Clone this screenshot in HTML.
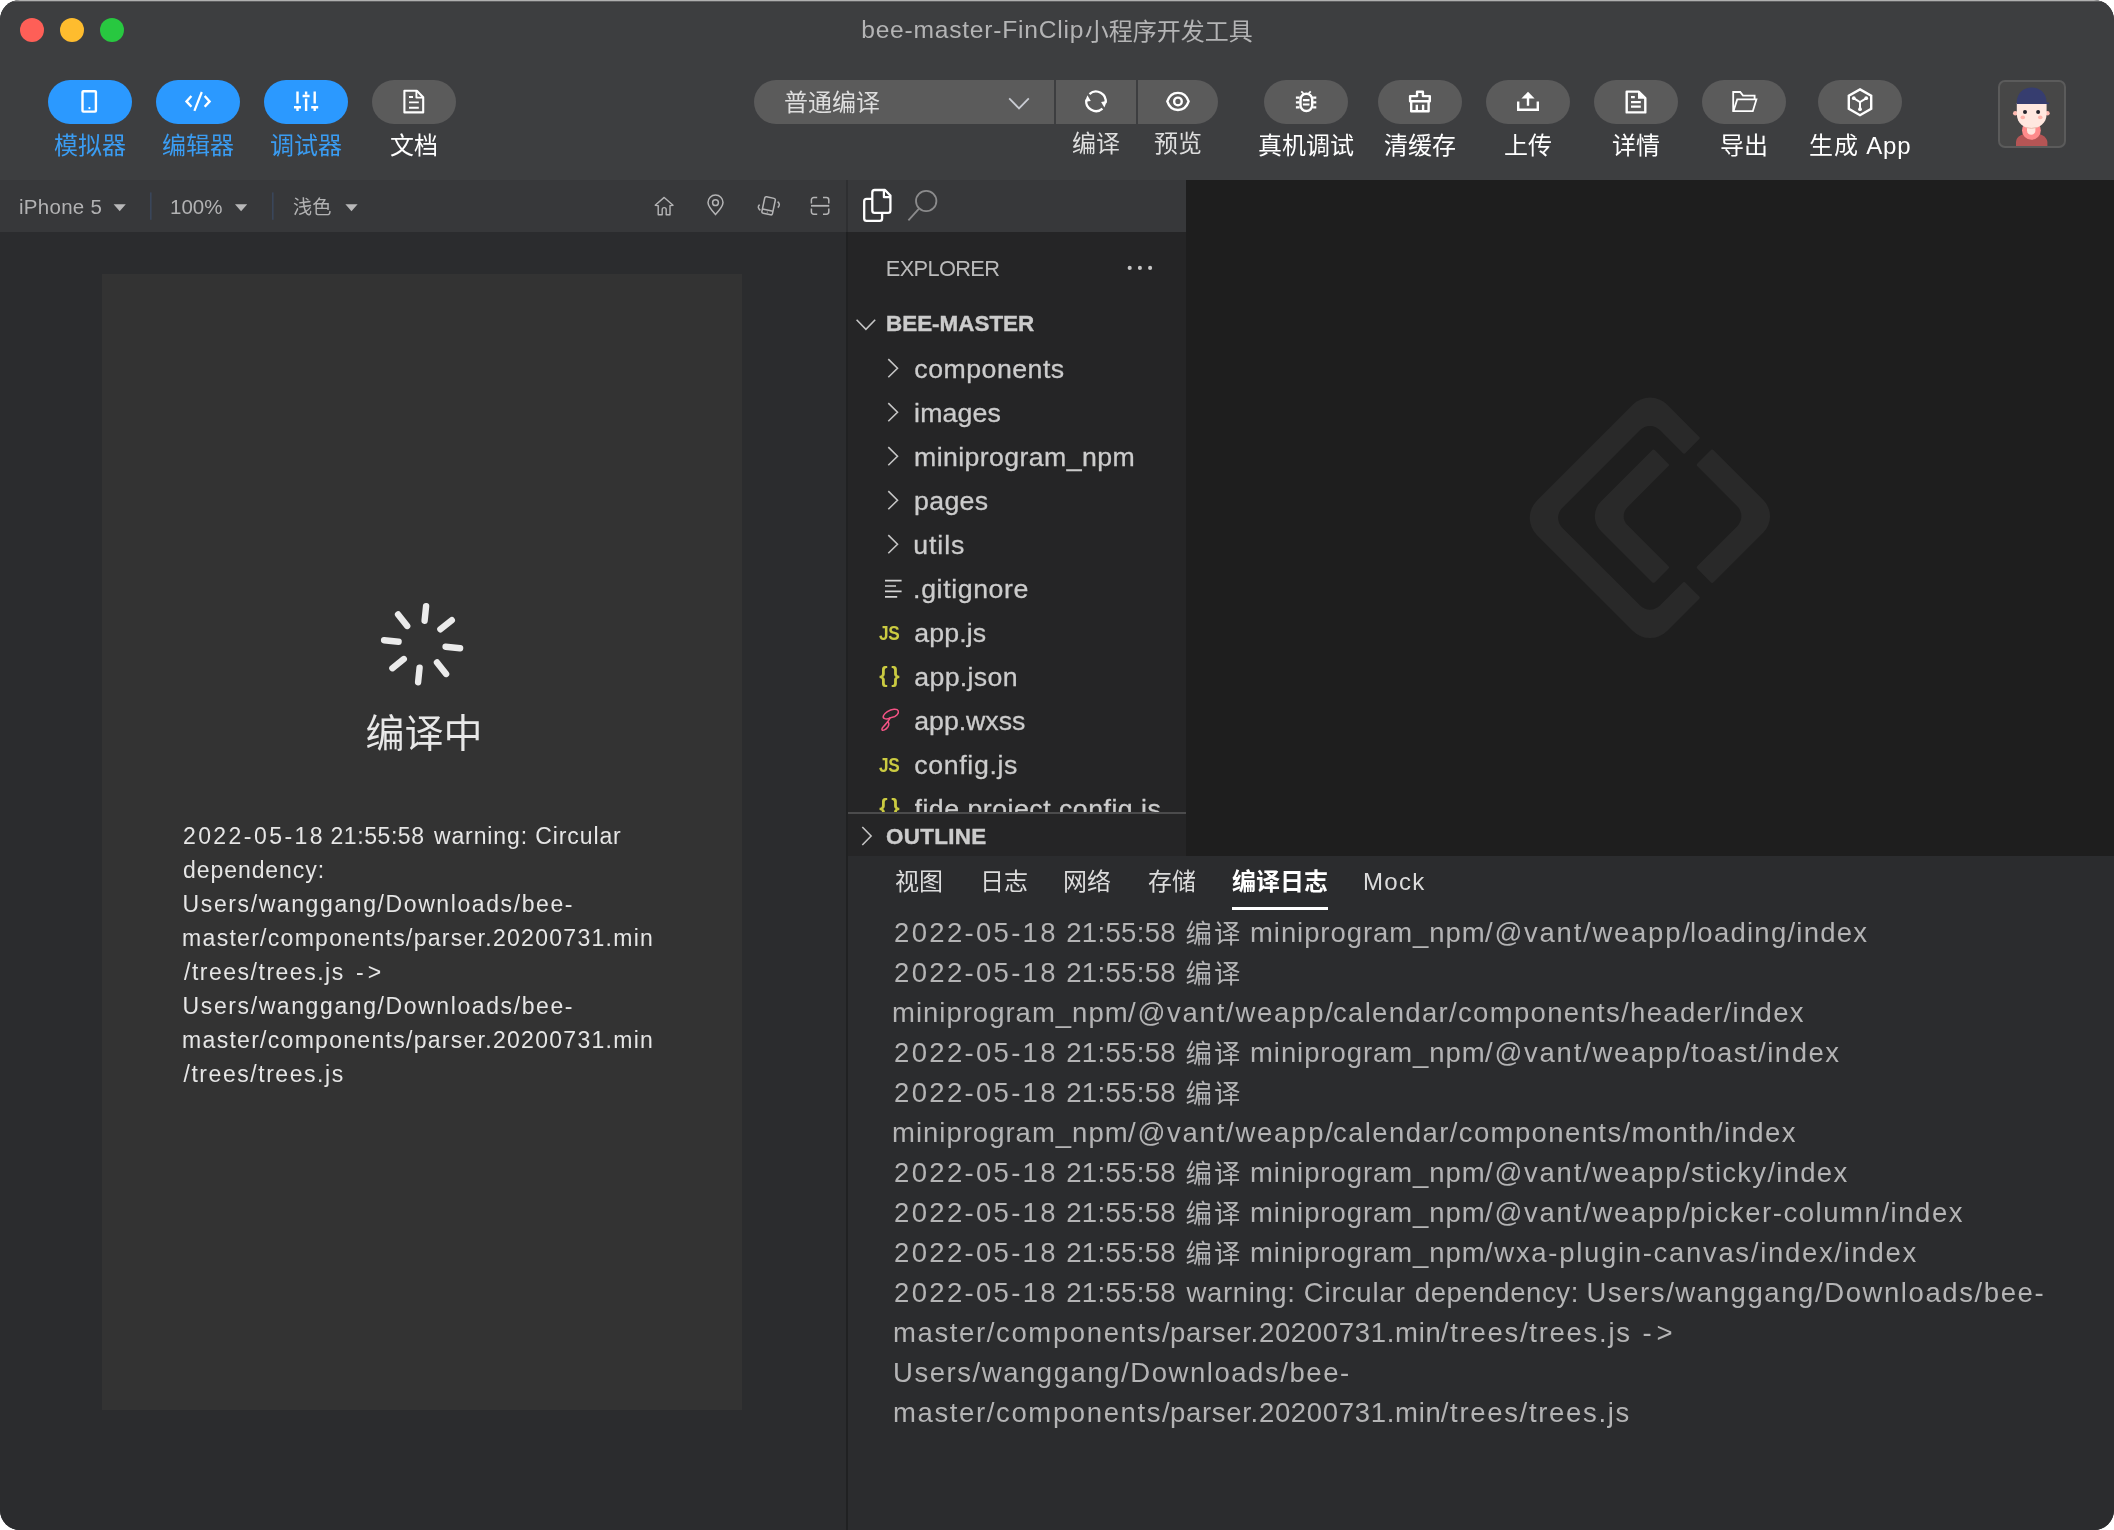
<!DOCTYPE html>
<html lang="zh-CN">
<head>
<meta charset="utf-8">
<title>bee-master-FinClip小程序开发工具</title>
<style>
html,body{margin:0;padding:0;background:#fff;}
body{width:2114px;height:1530px;overflow:hidden;position:relative;
  font-family:"Liberation Sans","Noto Sans CJK SC",sans-serif;-webkit-font-smoothing:antialiased;}
*{box-sizing:border-box;}
#win{position:absolute;left:0;top:0;width:2114px;height:1530px;border-radius:20px;overflow:hidden;background:#2b2c2e;will-change:transform;}
.abs{position:absolute;}
.t{position:absolute;white-space:nowrap;line-height:1;}
svg{position:absolute;overflow:visible;}
/* top toolbar */
#topbar{position:absolute;left:0;top:0;width:2114px;height:180px;background:#3d3e40;}
#hl{position:absolute;left:0;top:0;width:2114px;height:3px;background:linear-gradient(#b0b0b0 0,#b0b0b0 1px,#5e5e60 1px,#5e5e60 2px,#3a3b3d 2px,#3a3b3d 3px);}
.dot{position:absolute;width:24px;height:24px;border-radius:50%;top:18px;}
.pill{position:absolute;top:80px;width:84px;height:44px;border-radius:22px;background:#5b5b5b;}
.pill.on{background:#2b99ff;}
.lbl{position:absolute;top:133px;width:160px;text-align:center;font-size:24px;line-height:26px;color:#fff;white-space:nowrap;}
.lbl.on{color:#3a9cf2;}
/* sub toolbar */
#simbar{position:absolute;left:0;top:180px;width:846px;height:52px;background:#37383a;}
#sim{position:absolute;left:0;top:232px;width:846px;height:1298px;background:#2b2c2e;}
#phone{position:absolute;left:102px;top:274px;width:640px;height:1136px;background:#333333;}
#vdiv{position:absolute;left:846px;top:180px;width:2px;height:1350px;background:#202122;}
#vdivtop{position:absolute;left:846px;top:180px;width:2px;height:52px;background:#2e2f31;}
/* explorer */
#actbar{position:absolute;left:848px;top:180px;width:338px;height:52px;background:#37383a;}
#explorer{position:absolute;left:848px;top:232px;width:338px;height:624px;background:#252526;overflow:hidden;}
#editor{position:absolute;left:1186px;top:180px;width:928px;height:676px;background:#1e1e1e;}
#panel{position:absolute;left:848px;top:856px;width:1266px;height:674px;background:#2b2c2e;}
.row{position:absolute;left:914px;margin-top:0.8px;font-size:26.7px;line-height:30px;color:#cccccc;white-space:nowrap;-webkit-text-stroke:0.3px #cccccc;}
.tab{position:absolute;top:868px;font-size:24px;line-height:28px;color:#dcdcdc;white-space:nowrap;}
.log{position:absolute;left:894px;margin-top:0.7px;font-size:27.5px;line-height:40px;color:#b4b4b5;white-space:nowrap;height:40px;}
.lp{position:absolute;top:0;white-space:nowrap;}
.cj{font-size:26.4px;margin-top:1.3px;}
.msg{position:absolute;left:183px;font-size:23px;margin-top:1.2px;line-height:34px;color:#e6e6e6;white-space:nowrap;}
/*FIT-START*/
#beem{letter-spacing:0.022px;margin-left:0.00px;margin-top:1.30px}
#exptitle{letter-spacing:-0.657px;margin-left:-0.20px;margin-top:0.60px}
#lg0a{letter-spacing:2.302px;margin-left:0.10px}
#lg0b{letter-spacing:1.900px;margin-left:0.60px}
#lg0c{letter-spacing:0.929px;margin-left:-2.00px}
#lg0d{letter-spacing:1.750px;margin-left:-1.00px}
#lg0e{letter-spacing:1.250px;margin-left:-2.00px}
#lg0t{letter-spacing:0.332px;margin-left:0.20px}
#lg10c{letter-spacing:1.624px;margin-left:-1.00px}
#lg10d{letter-spacing:0.689px;margin-left:-1.00px}
#lg10e{letter-spacing:1.728px;margin-left:0.80px}
#lg10f{letter-spacing:5.000px;margin-left:4.40px}
#lg11c{letter-spacing:1.550px;margin-left:-1.00px}
#lg12c{letter-spacing:1.624px;margin-left:-1.00px}
#lg12d{letter-spacing:0.689px;margin-left:-1.00px}
#lg12e{letter-spacing:1.671px;margin-left:0.80px}
#lg1a{letter-spacing:2.302px;margin-left:0.10px}
#lg1b{letter-spacing:1.900px;margin-left:0.60px}
#lg1t{letter-spacing:0.332px;margin-left:0.20px}
#lg2c{letter-spacing:1.000px;margin-left:-2.00px}
#lg2d{letter-spacing:1.750px;margin-left:0.00px}
#lg2e{letter-spacing:1.323px;margin-left:-1.00px}
#lg3a{letter-spacing:2.302px;margin-left:0.10px}
#lg3b{letter-spacing:1.900px;margin-left:0.60px}
#lg3c{letter-spacing:0.929px;margin-left:-2.00px}
#lg3d{letter-spacing:1.750px;margin-left:-1.00px}
#lg3e{letter-spacing:1.500px;margin-left:-1.00px}
#lg3t{letter-spacing:0.332px;margin-left:0.20px}
#lg4a{letter-spacing:2.302px;margin-left:0.10px}
#lg4b{letter-spacing:1.900px;margin-left:0.60px}
#lg4t{letter-spacing:0.332px;margin-left:0.20px}
#lg5c{letter-spacing:1.000px;margin-left:-2.00px}
#lg5d{letter-spacing:1.750px;margin-left:0.00px}
#lg5e{letter-spacing:1.400px;margin-left:-1.00px}
#lg6a{letter-spacing:2.302px;margin-left:0.10px}
#lg6b{letter-spacing:1.900px;margin-left:0.60px}
#lg6c{letter-spacing:0.929px;margin-left:-2.00px}
#lg6d{letter-spacing:1.750px;margin-left:-1.00px}
#lg6e{letter-spacing:1.273px;margin-left:-1.00px}
#lg6t{letter-spacing:0.332px;margin-left:0.20px}
#lg7a{letter-spacing:2.302px;margin-left:0.10px}
#lg7b{letter-spacing:1.900px;margin-left:0.60px}
#lg7c{letter-spacing:0.929px;margin-left:-2.00px}
#lg7d{letter-spacing:1.750px;margin-left:-1.00px}
#lg7e{letter-spacing:1.556px;margin-left:-2.00px}
#lg7t{letter-spacing:0.332px;margin-left:0.20px}
#lg8a{letter-spacing:2.302px;margin-left:0.10px}
#lg8b{letter-spacing:1.900px;margin-left:0.60px}
#lg8c{letter-spacing:0.929px;margin-left:-2.00px}
#lg8e{letter-spacing:1.690px;margin-left:-1.00px}
#lg8t{letter-spacing:0.332px;margin-left:0.20px}
#lg9a{letter-spacing:2.313px;margin-left:0.10px}
#lg9c{letter-spacing:0.614px;margin-left:0.60px}
#lg9d{letter-spacing:0.907px;margin-left:-0.20px}
#lg9e{letter-spacing:0.600px;margin-left:-0.20px}
#lg9f{letter-spacing:1.586px;margin-left:-1.60px}
#lg9t{letter-spacing:0.332px;margin-left:0.20px}
#outl{letter-spacing:0.300px;margin-left:0.00px;margin-top:2.80px}
#tc{letter-spacing:0.000px;margin-left:0.70px;margin-top:2.00px}
#tl{letter-spacing:0.770px;margin-left:0.20px}
#x13{letter-spacing:0.840px;margin-left:0.30px}
#x14{letter-spacing:0.286px;margin-left:-1.00px}
#x15{letter-spacing:0.000px;margin-left:-1.00px}
#x16{margin-left:-0.00px;margin-top:2.00px}
#x18{letter-spacing:2.440px;margin-left:-0.10px}
#x18t{letter-spacing:0.571px;margin-left:-0.50px}
#x18w{letter-spacing:0.894px;margin-left:0.90px}
#x19{letter-spacing:0.920px;margin-left:0.10px}
#x20{letter-spacing:1.596px;margin-left:-0.40px}
#x21{letter-spacing:1.286px;margin-left:-0.90px}
#x22{letter-spacing:1.512px;margin-left:1.00px}
#x22f{letter-spacing:4.000px;margin-left:3.00px}
#x23{letter-spacing:1.596px;margin-left:-0.40px}
#x24{letter-spacing:1.286px;margin-left:-0.90px}
#x25{letter-spacing:1.543px;margin-left:0.50px}
#x26{letter-spacing:0.500px;margin-left:0.30px}
#x27{letter-spacing:0.120px;margin-left:0.10px}
#x28{letter-spacing:0.393px;margin-left:0.10px}
#x29{letter-spacing:0.325px;margin-left:0.10px}
#x30{letter-spacing:0.900px;margin-left:-0.70px}
#x31{letter-spacing:0.611px;margin-left:-0.90px}
#x32{letter-spacing:0.120px;margin-left:0.30px}
#x34{letter-spacing:0.329px;margin-left:0.30px}
#x36{letter-spacing:-0.029px;margin-left:0.30px}
#x37{letter-spacing:0.650px;margin-left:0.30px}
#x39{letter-spacing:0.500px;margin-left:0.50px}
#x41{margin-left:-0.00px}
#x42{margin-left:1.00px}
#x43{margin-left:0.00px}
#x44{margin-left:1.00px}
#x45{margin-left:1.00px}
#x46{letter-spacing:1.333px;margin-left:0.00px}
#x5{margin-left:0.00px;margin-top:1.00px}
/*FIT-END*/
</style>
</head>
<body>
<div id="win">
<div id="topbar"></div>
<div id="hl"></div>
<!-- traffic lights -->
<div class="dot" style="left:19.5px;background:#fe5f57;"></div>
<div class="dot" style="left:59.5px;background:#febc2e;"></div>
<div class="dot" style="left:99.5px;background:#28c840;"></div>
<div class="t" id="title" style="left:0;top:15px;font-size:24.6px;line-height:30px;color:#b4b4b5;"><span class="lp" id="tl" style="left:861px;">bee-master-FinClip</span><span class="lp" id="tc" style="left:1084px;font-size:24px;">小程序开发工具</span></div>

<!-- TOOLBAR-LEFT -->
<div class="pill on" style="left:48px;"></div>
<div class="pill on" style="left:156px;"></div>
<div class="pill on" style="left:264px;"></div>
<div class="pill" style="left:372px;"></div>
<svg style="left:48px;top:80px;" width="84" height="44" viewBox="0 0 84 44" fill="none" stroke="#fff" stroke-width="2.4">
  <rect x="34.5" y="11.2" width="13.4" height="20.4" rx="0.9"/>
  <circle cx="41.4" cy="28.1" r="1.1" fill="#fff" stroke="none"/>
</svg>
<svg style="left:156px;top:80px;" width="84" height="44" viewBox="0 0 84 44" fill="none" stroke="#fff" stroke-width="2.4">
  <path d="M35.4 16 L30.5 21.4 L35.4 26.8"/>
  <path d="M48.7 16 L53.6 21.4 L48.7 26.8"/>
  <path d="M45.8 12 L38.4 30.8" stroke-width="2.2"/>
</svg>
<svg style="left:264px;top:80px;" width="84" height="44" viewBox="0 0 84 44" fill="none" stroke="#fff" stroke-width="2.4">
  <path d="M33.5 11.6 V23.4 M33.5 27.2 V31 M30 27.2 H37"/>
  <path d="M42.1 11.6 V14.4 M42.1 18.6 V31 M38.6 16 H45.6"/>
  <path d="M50.7 11.6 V23.4 M50.7 27.2 V31 M47.2 27.2 H54.2"/>
</svg>
<svg style="left:372px;top:80px;" width="84" height="44" viewBox="0 0 84 44" fill="none" stroke="#fff" stroke-width="2.1" stroke-linejoin="round">
  <path d="M32.4 10.7 H44.8 L51.2 17.2 V32.4 H32.4 Z"/>
  <path d="M44.4 11 V17.6 H51" stroke-width="1.9"/>
  <path d="M37 17 H41 M37 22.4 H46.8 M37 27.8 H46.8" stroke-width="1.9"/>
</svg>
<div id="x1" class="lbl on" style="left:10px;">模拟器</div>
<div id="x2" class="lbl on" style="left:118px;">编辑器</div>
<div id="x3" class="lbl on" style="left:226px;">调试器</div>
<div id="x4" class="lbl" style="left:334px;">文档</div>
<!-- TOOLBAR-CENTER -->
<div class="abs" style="left:754px;top:80px;width:300px;height:44px;border-radius:22px 0 0 22px;background:#5b5b5b;"></div>
<div class="abs" style="left:1056px;top:80px;width:80px;height:44px;background:#5b5b5b;"></div>
<div class="abs" style="left:1138px;top:80px;width:80px;height:44px;border-radius:0 22px 22px 0;background:#5b5b5b;"></div>
<div id="x5" class="t" style="left:784px;top:88px;font-size:24px;line-height:28px;color:#dedede;">普通编译</div>
<svg style="left:1004px;top:92px;" width="30" height="22" viewBox="0 0 30 22" fill="none" stroke="#c9ccd3" stroke-width="1.8">
  <path d="M5.2 6.4 L15 16.4 L24.8 6.4"/>
</svg>
<svg style="left:1056px;top:80px;" width="80" height="44" viewBox="0 0 80 44" fill="none" stroke="#fff" stroke-width="2.3">
  <path d="M33.47 14.13 A9.7 9.7 0 0 1 49.51 23.02"/>
  <path d="M46.45 28.55 A9.7 9.7 0 0 1 30.41 19.66"/>
  <path d="M45.1 21.9 L50.9 21.1 L48.4 27.6 Z" fill="#fff" stroke="none"/>
  <path d="M34.8 21 L29 21.7 L31.4 15.2 Z" fill="#fff" stroke="none"/>
</svg>
<svg style="left:1138px;top:80px;" width="80" height="44" viewBox="0 0 80 44" fill="none" stroke="#fff" stroke-width="2.4">
  <path d="M29.3 21.4 C31 16.2 35 12.85 39.95 12.85 C44.9 12.85 48.9 16.2 50.6 21.4 C48.9 26.6 44.9 29.95 39.95 29.95 C35 29.95 31 26.6 29.3 21.4 Z"/>
  <circle cx="39.95" cy="21.4" r="3.8"/>
</svg>
<div id="x6" class="lbl" style="left:1016px;top:131px;color:#dedede;">编译</div>
<div id="x7" class="lbl" style="left:1098px;top:131px;color:#dedede;">预览</div>
<!-- TOOLBAR-RIGHT -->
<div class="pill" style="left:1264px;"></div>
<div class="pill" style="left:1378px;"></div>
<div class="pill" style="left:1486px;"></div>
<div class="pill" style="left:1594px;"></div>
<div class="pill" style="left:1702px;"></div>
<div class="pill" style="left:1818px;"></div>
<!-- bug -->
<svg style="left:1264px;top:80px;" width="84" height="44" viewBox="0 0 84 44" fill="none" stroke="#fff" stroke-width="2.4">
  <rect x="36.5" y="13.7" width="11.7" height="17.3" rx="5.85"/>
  <path d="M31.9 17.7 H35.6 M31.9 22.3 H35.6 M31.9 27.3 H35.6 M49.1 17.7 H52.3 M49.1 22.3 H52.3 M49.1 27.3 H52.3" stroke-width="2.2"/>
  <path d="M38.9 20.1 H45.5 M38.9 24.5 H45.5" stroke-width="2.2"/>
  <path d="M37.3 11.4 L39.8 14 M46.7 11.4 L44.2 14" stroke-width="1.8"/>
</svg>
<!-- broom -->
<svg style="left:1378px;top:80px;" width="84" height="44" viewBox="0 0 84 44" fill="none" stroke="#fff" stroke-width="2.4">
  <path d="M32.1 21.2 V16.1 H39.05 V11.7 H44.9 V16.1 H51.8 V21.2 Z" stroke-linejoin="round"/>
  <path d="M33.2 21.2 V31.3 H50.6 V21.2" stroke-linejoin="round"/>
  <path d="M38.8 24.7 V31.3 M45.1 24.7 V31.3"/>
</svg>
<!-- upload -->
<svg style="left:1486px;top:80px;" width="84" height="44" viewBox="0 0 84 44" fill="none" stroke="#fff" stroke-width="2.4">
  <path d="M32.2 21.6 V29.8 H51.8 V21.6"/>
  <path d="M42 25.8 V16"/>
  <path d="M35.4 18.6 L42 11.8 L48.6 18.6 Z" fill="#fff" stroke="none"/>
</svg>
<!-- detail doc -->
<svg style="left:1594px;top:80px;" width="84" height="44" viewBox="0 0 84 44" fill="none" stroke="#fff" stroke-width="2.4">
  <path d="M32.7 11.6 H44.6 L51.3 18.2 V32.4 H32.7 Z" stroke-linejoin="round"/>
  <path d="M44 11.2 L51.6 18.8 H44 Z" fill="#fff" stroke="none"/>
  <path d="M37 17.2 H40.8 M37 22.2 H46.8 M37 26.7 H46.8" stroke-width="2.2"/>
</svg>
<!-- folder -->
<svg style="left:1702.7px;top:80px;" width="84" height="44" viewBox="0 0 84 44" fill="none" stroke="#fff" stroke-width="1.8" stroke-linejoin="miter">
  <path d="M30.2 31.2 V12 H37.2 L40 15.6 H51.6 V19.4"/>
  <path d="M30.4 31.2 L34.2 19.4 H53.4 L49.8 31.2 Z"/>
</svg>
<!-- box -->
<svg style="left:1818px;top:80px;" width="84" height="44" viewBox="0 0 84 44" fill="none" stroke="#fff" stroke-width="2.4" stroke-linejoin="miter">
  <path d="M42 9.4 L53.2 15.8 V28.8 L42 35.2 L30.8 28.8 V15.8 Z"/>
  <path d="M36 18.4 L42 22 L48 18.4 M42 22 V29" stroke-width="2"/>
  <circle cx="35.8" cy="18.2" r="1.9" fill="#fff" stroke="none"/>
  <circle cx="48.2" cy="18.2" r="1.9" fill="#fff" stroke="none"/>
  <circle cx="42" cy="29.2" r="1.9" fill="#fff" stroke="none"/>
</svg>
<div id="x8" class="lbl" style="left:1226px;">真机调试</div>
<div id="x9" class="lbl" style="left:1340px;">清缓存</div>
<div id="x10" class="lbl" style="left:1448px;">上传</div>
<div id="x11" class="lbl" style="left:1556px;">详情</div>
<div id="x12" class="lbl" style="left:1664px;">导出</div>
<div id="x13" class="lbl" style="left:1780px;">生成 App</div>
<!-- avatar -->
<div class="abs" style="left:1998px;top:80px;width:68px;height:68px;border-radius:7px;background:#474747;border:2px solid #5b5b5b;overflow:hidden;"></div>
<svg style="left:1998px;top:80px;" width="68" height="68" viewBox="0 0 68 68">
  <defs><clipPath id="avc"><rect x="2" y="2" width="64" height="64" rx="5"/></clipPath></defs>
  <g clip-path="url(#avc)">
    <path d="M18 70 V62 C18 50 48.6 50 49.4 62 V70 Z" fill="#b55555"/>
    <circle cx="33.4" cy="50.4" r="9.4" fill="#ff8b8b"/>
    <path d="M29 44 H37.4 V50.6 C37.4 56.2 29 56.2 29 50.6 Z" fill="#ffe7df"/>
    <circle cx="17.3" cy="33.2" r="2.3" fill="#ffb9b0"/>
    <circle cx="49.4" cy="33.2" r="2.3" fill="#ffb9b0"/>
    <path d="M18.8 23 H48.6 V34 C48.6 53 18.8 53 18.8 34 Z" fill="#ffe7df"/>
    <path d="M27.4 47.4 Q33.4 49.4 39.4 47.4" stroke="#e9bcae" stroke-width="1" fill="none"/>
    <path d="M18.8 24 V22.4 C18.8 2.4 48.6 2.4 48.6 22.4 L51 22.6 Q51.6 24 50.4 24 Z" fill="#363d6f"/>
    <circle cx="27" cy="32" r="2" fill="#24242c"/>
    <circle cx="40.1" cy="32" r="2" fill="#24242c"/>
    <ellipse cx="24.8" cy="37.4" rx="2.3" ry="1.8" fill="#ffb3aa"/>
    <ellipse cx="42.3" cy="37.4" rx="2.3" ry="1.8" fill="#ffb3aa"/>
  </g>
</svg>

<div id="simbar"></div>
<div id="sim"></div>
<div id="phone"></div>
<!-- SIMBAR-CONTENT -->
<div id="x14" class="t" style="left:20px;top:194px;font-size:20.5px;line-height:26px;color:#b2b2b3;">iPhone 5</div>
<div id="x15" class="t" style="left:171px;top:194px;font-size:20.5px;line-height:26px;color:#b2b2b3;">100%</div>
<div id="x16" class="t" style="left:293px;top:193px;font-size:19.2px;line-height:26px;color:#b2b2b3;">浅色</div>
<svg style="left:0;top:180px;" width="846" height="52" viewBox="0 0 846 52" fill="#b8b8b9">
  <path d="M113.6 24.2 H125.8 L119.7 31.2 Z"/>
  <path d="M235 24.2 H247.2 L241.1 31.2 Z"/>
  <path d="M345.4 24.2 H357.6 L351.5 31.2 Z"/>
  <rect x="150" y="12.4" width="1.6" height="27.4" fill="#3a465a"/>
  <rect x="272" y="12.4" width="1.6" height="27.4" fill="#3a465a"/>
  <g fill="none" stroke="#b4b4b5" stroke-width="1.5" stroke-linejoin="round">
    <!-- home -->
    <path d="M664.2 17.4 L673 25.2 L670 25.6 V34.8 H666.2 V29.6 A2 2 0 0 0 662.2 29.6 V34.8 H658.2 V25.6 L655.2 25.2 Z" stroke-width="1.4"/>
    <!-- location -->
    <path d="M715.5 34.6 C711.4 30.2 708 26.4 708 22.6 A7.5 7.5 0 0 1 723 22.6 C723 26.4 719.6 30.2 715.5 34.6 Z"/>
    <circle cx="715.5" cy="22.7" r="2.9"/>
    <!-- rotate phone -->
    <g transform="rotate(12 768.6 25.8)">
      <rect x="763.2" y="17.4" width="10.8" height="16.8" rx="1.6"/>
      <path d="M763.4 30.2 H774"/>
      <circle cx="768.6" cy="32.2" r="0.6" fill="#b4b4b5" stroke="none"/>
    </g>
    <path d="M759.6 24.6 Q756.6 27.4 760.4 30.4"/>
    <path d="M777.6 21.6 Q781 24.4 777.8 27.6"/>
    <!-- scan -->
    <path d="M811.4 23.4 V20 A2.4 2.4 0 0 1 813.8 17.6 H817.2"/>
    <path d="M823 17.6 H826.4 A2.4 2.4 0 0 1 828.8 20 V23.4"/>
    <path d="M811.4 28.4 V31.8 A2.4 2.4 0 0 0 813.8 34.2 H817.2"/>
    <path d="M823 34.2 H826.4 A2.4 2.4 0 0 0 828.8 31.8 V28.4"/>
    <path d="M811 25.8 H829.2" stroke-width="1.8"/>
  </g>
</svg>
<!-- SIM-CONTENT -->
<svg style="left:0;top:0;" width="846" height="1530" viewBox="0 0 846 1530" fill="none" stroke="#ebebeb" stroke-width="6.4" stroke-linecap="round">
  <path d="M424.6 620.7 L426.1 606.2 M440.4 629.3 L451.8 620.2 M445.6 646.7 L460.1 648.2 M437.0 662.5 L446.1 673.9 M419.6 667.7 L418.1 682.2 M403.8 659.1 L392.4 668.2 M398.6 641.7 L384.1 640.2 M407.2 625.9 L398.1 614.5"/>
</svg>
<div id="x17" class="t" style="left:104px;width:640px;text-align:center;top:710px;font-size:39px;line-height:48px;color:#e8e8e8;">编译中</div>
<div class="msg" style="top:818px;height:34px;"><span class="lp" id="x18" style="left:0;">2022-05-18 </span><span class="lp" id="x18t" style="left:148px;">21:55:58 </span><span class="lp" id="x18w" style="left:250px;">warning: Circular</span></div>
<div id="x19" class="msg" style="top:852px;">dependency:</div>
<div id="x20" class="msg" style="top:886px;">Users/wanggang/Downloads/bee-</div>
<div id="x21" class="msg" style="top:920px;">master/components/parser.20200731.min</div>
<div class="msg" style="top:954px;height:34px;"><span class="lp" id="x22" style="left:0;">/trees/trees.js </span><span class="lp" id="x22f" style="left:170px;">-&gt;</span></div>
<div id="x23" class="msg" style="top:988px;">Users/wanggang/Downloads/bee-</div>
<div id="x24" class="msg" style="top:1022px;">master/components/parser.20200731.min</div>
<div id="x25" class="msg" style="top:1056px;">/trees/trees.js</div>

<div id="actbar"></div>
<div id="explorer"></div>
<div id="editor"></div>
<div id="panel"></div>
<div id="vdiv"></div>
<div id="vdivtop"></div>
<!-- EXPLORER-CONTENT -->
<svg style="left:848px;top:180px;" width="338" height="52" viewBox="0 0 338 52" fill="none">
  <g stroke="#ffffff" stroke-width="2.3" stroke-linejoin="round">
    <path d="M24.3 18.8 H18.6 A2.4 2.4 0 0 0 16.2 21.2 V38.5 A2.4 2.4 0 0 0 18.6 40.9 H31.7 A2.4 2.4 0 0 0 34.1 38.5 V32.8"/>
    <path d="M26.7 10 H37 L42.4 15.6 V30.4 A2.4 2.4 0 0 1 40 32.8 H26.7 A2.4 2.4 0 0 1 24.3 30.4 V12.4 A2.4 2.4 0 0 1 26.7 10 Z"/>
    <path d="M35.9 10.4 V17.2 H42" stroke-width="2.2"/>
  </g>
  <g stroke="#8b8b8c" stroke-width="1.8">
    <circle cx="78.2" cy="21" r="10.2"/>
    <path d="M71 28.6 L60.4 40.4"/>
  </g>
</svg>
<div class="t" style="left:886px;top:255px;font-size:21.8px;line-height:26px;color:#bbbbbb;" id="exptitle">EXPLORER</div>
<svg style="left:1120px;top:258px;" width="40" height="20" viewBox="0 0 40 20" fill="#c5c5c5">
  <circle cx="9.7" cy="9.9" r="2.05"/><circle cx="19.9" cy="9.9" r="2.05"/><circle cx="30.1" cy="9.9" r="2.05"/>
</svg>
<svg style="left:848px;top:232px;" width="338" height="624" viewBox="0 0 338 624" fill="none" stroke="#c5c5c5" stroke-width="1.6">
  <path d="M8.6 87.8 L17.9 97.4 L27.2 87.8"/>
</svg>
<div class="t" style="left:886px;top:310px;font-size:22.4px;line-height:26px;color:#cccccc;font-weight:bold;-webkit-text-stroke:0.4px #cccccc;" id="beem">BEE-MASTER</div>
<div class="abs" style="left:848px;top:232px;width:338px;height:580px;overflow:hidden;">
<div id="x26" class="row" style="left:66px;top:121px;">components</div>
<svg style="left:36px;top:124px;" width="20" height="24" viewBox="0 0 20 24" fill="none" stroke="#c5c5c5" stroke-width="1.6"><path d="M4.3 3.1 L13.5 12.2 L4.3 21.3"/></svg>
<div id="x27" class="row" style="left:66px;top:165px;">images</div>
<svg style="left:36px;top:168px;" width="20" height="24" viewBox="0 0 20 24" fill="none" stroke="#c5c5c5" stroke-width="1.6"><path d="M4.3 3.1 L13.5 12.2 L4.3 21.3"/></svg>
<div id="x28" class="row" style="left:66px;top:209px;">miniprogram_npm</div>
<svg style="left:36px;top:212px;" width="20" height="24" viewBox="0 0 20 24" fill="none" stroke="#c5c5c5" stroke-width="1.6"><path d="M4.3 3.1 L13.5 12.2 L4.3 21.3"/></svg>
<div id="x29" class="row" style="left:66px;top:253px;">pages</div>
<svg style="left:36px;top:256px;" width="20" height="24" viewBox="0 0 20 24" fill="none" stroke="#c5c5c5" stroke-width="1.6"><path d="M4.3 3.1 L13.5 12.2 L4.3 21.3"/></svg>
<div id="x30" class="row" style="left:66px;top:297px;">utils</div>
<svg style="left:36px;top:300px;" width="20" height="24" viewBox="0 0 20 24" fill="none" stroke="#c5c5c5" stroke-width="1.6"><path d="M4.3 3.1 L13.5 12.2 L4.3 21.3"/></svg>
<div id="x31" class="row" style="left:66px;top:341px;">.gitignore</div>
<svg style="left:34px;top:344px;" width="24" height="24" viewBox="0 0 24 24" fill="none" stroke="#d4d4d4" stroke-width="1.7"><path d="M3 4.6 H19.6 M3 10 H14 M3 15.4 H19.6 M3 20.8 H15.2"/></svg>
<div id="x32" class="row" style="left:66px;top:385px;">app.js</div>
<div id="x33" class="t" style="left:31px;top:389px;font-size:20.5px;line-height:24px;font-weight:bold;color:#cbcb41;letter-spacing:-0.3px;transform:scaleX(0.84);transform-origin:0 50%;">JS</div>
<div id="x34" class="row" style="left:66px;top:429px;">app.json</div>
<div id="x35" class="t" style="left:31.3px;top:431px;font-size:21.5px;line-height:24px;font-weight:bold;color:#cbcb41;letter-spacing:3.6px;">{}</div>
<div id="x36" class="row" style="left:66px;top:473px;">app.wxss</div>
<svg style="left:30px;top:474px;" width="24" height="26" viewBox="0 0 24 26" fill="none" stroke="#f55385" stroke-width="1.5" stroke-linecap="round"><path d="M13.4 11.6 C18.6 10.4 21.2 7.2 20.2 4.8 C19.2 2.4 13.6 2.8 9.4 5.6 C5.6 8.2 4 11.2 6.2 12.4 C8 13.4 10.6 12.8 12 11.8"/><path d="M12.2 11.8 C10.6 14.8 8.6 17.4 6.6 19.4 C4.8 21.2 3.4 22.6 4 23.8 C4.8 25 7.8 23.8 9.8 21 C11.4 18.6 11 16 9.4 15.4"/></svg>
<div id="x37" class="row" style="left:66px;top:517px;">config.js</div>
<div id="x38" class="t" style="left:31px;top:521px;font-size:20.5px;line-height:24px;font-weight:bold;color:#cbcb41;letter-spacing:-0.3px;transform:scaleX(0.84);transform-origin:0 50%;">JS</div>
<div id="x39" class="row" style="left:66px;top:561px;width:275px;overflow:hidden;text-overflow:ellipsis;">fide.project.config.json</div>
<div id="x40" class="t" style="left:31.3px;top:563px;font-size:21.5px;line-height:24px;font-weight:bold;color:#cbcb41;letter-spacing:3.6px;">{}</div>
</div>
<div class="abs" style="left:848px;top:812px;width:338px;height:2px;background:#4b4b4c;"></div>
<div class="abs" style="left:848px;top:814px;width:338px;height:42px;background:#252526;"></div>
<svg style="left:848px;top:814px;" width="40" height="42" viewBox="0 0 40 42" fill="none" stroke="#c5c5c5" stroke-width="1.6"><path d="M14.3 13 L23.1 22 L14.3 31"/></svg>
<div class="t" style="left:886px;top:821px;font-size:22.4px;line-height:26px;color:#cccccc;font-weight:bold;-webkit-text-stroke:0.4px #cccccc;" id="outl">OUTLINE</div>
<!-- EDITOR-CONTENT -->
<svg style="left:1186px;top:180px;" width="928" height="676" viewBox="1186 180 928 676" fill="#292929">
  <path d="M1699.3 439.1 L1699.5 438.9 L1699.6 438.6 L1699.7 438.3 L1699.8 438.0 L1699.7 437.7 L1699.6 437.4 L1699.5 437.1 L1699.3 436.9 L1667.0 404.6 L1663.4 401.6 L1659.2 399.4 L1654.7 398.0 L1650.0 397.6 L1645.3 398.0 L1640.8 399.4 L1636.6 401.6 L1633.0 404.6 L1536.8 500.8 L1533.8 504.5 L1531.6 508.6 L1530.2 513.1 L1529.7 517.9 L1530.2 522.6 L1531.6 527.1 L1533.8 531.2 L1536.8 534.9 L1633.0 631.1 L1636.6 634.1 L1640.8 636.3 L1645.3 637.7 L1650.0 638.1 L1654.7 637.7 L1659.2 636.3 L1663.4 634.1 L1667.0 631.1 L1699.3 598.8 L1699.5 598.6 L1699.6 598.3 L1699.7 598.0 L1699.8 597.7 L1699.7 597.4 L1699.6 597.1 L1699.5 596.8 L1699.3 596.6 L1685.2 582.5 L1685.0 582.3 L1684.7 582.2 L1684.4 582.1 L1684.1 582.0 L1683.8 582.1 L1683.5 582.2 L1683.2 582.3 L1683.0 582.5 L1659.9 605.6 L1657.8 607.3 L1655.4 608.6 L1652.7 609.4 L1650.0 609.7 L1647.3 609.4 L1644.6 608.6 L1642.2 607.3 L1640.1 605.6 L1562.2 527.7 L1560.5 525.6 L1559.2 523.2 L1558.4 520.6 L1558.1 517.9 L1558.4 515.1 L1559.2 512.5 L1560.5 510.1 L1562.2 508.0 L1640.1 430.1 L1642.2 428.4 L1644.6 427.1 L1647.3 426.3 L1650.0 426.0 L1652.7 426.3 L1655.4 427.1 L1657.8 428.4 L1659.9 430.1 L1683.0 453.2 L1683.2 453.4 L1683.5 453.5 L1683.8 453.6 L1684.1 453.7 L1684.4 453.6 L1684.7 453.5 L1685.0 453.4 L1685.2 453.2Z"/>
  <path d="M1654.7 450.0 L1654.4 449.8 L1654.1 449.7 L1653.8 449.6 L1653.5 449.5 L1653.2 449.6 L1652.9 449.7 L1652.6 449.8 L1652.4 450.0 L1600.9 501.5 L1598.3 504.6 L1596.4 508.2 L1595.2 512.1 L1594.8 516.2 L1595.2 520.3 L1596.4 524.2 L1598.3 527.8 L1600.9 530.9 L1652.4 582.4 L1652.6 582.6 L1652.9 582.7 L1653.2 582.8 L1653.5 582.9 L1653.8 582.8 L1654.1 582.7 L1654.4 582.6 L1654.7 582.4 L1668.5 568.5 L1668.7 568.3 L1668.9 568.0 L1669.0 567.7 L1669.0 567.4 L1669.0 567.1 L1668.9 566.8 L1668.7 566.5 L1668.5 566.3 L1627.4 525.1 L1625.8 523.2 L1624.6 521.0 L1623.9 518.7 L1623.7 516.2 L1623.9 513.7 L1624.6 511.4 L1625.8 509.2 L1627.4 507.3 L1668.5 466.1 L1668.7 465.9 L1668.9 465.6 L1669.0 465.3 L1669.0 465.0 L1669.0 464.7 L1668.9 464.4 L1668.7 464.1 L1668.5 463.9Z"/>
  <path d="M1711.0 449.9 L1711.3 449.7 L1711.5 449.6 L1711.8 449.5 L1712.2 449.5 L1712.5 449.5 L1712.8 449.6 L1713.0 449.7 L1713.3 449.9 L1763.3 500.0 L1766.2 503.5 L1768.3 507.4 L1769.6 511.7 L1770.1 516.2 L1769.6 520.7 L1768.3 525.0 L1766.2 528.9 L1763.3 532.4 L1713.3 582.5 L1713.0 582.7 L1712.8 582.8 L1712.5 582.9 L1712.2 582.9 L1711.8 582.9 L1711.5 582.8 L1711.3 582.7 L1711.0 582.5 L1697.2 568.6 L1697.0 568.4 L1696.8 568.1 L1696.7 567.8 L1696.7 567.5 L1696.7 567.2 L1696.8 566.9 L1697.0 566.6 L1697.2 566.3 L1737.3 526.2 L1739.0 524.1 L1740.3 521.6 L1741.1 519.0 L1741.4 516.2 L1741.1 513.4 L1740.3 510.8 L1739.0 508.3 L1737.3 506.2 L1697.2 466.1 L1697.0 465.8 L1696.8 465.5 L1696.7 465.2 L1696.7 464.9 L1696.7 464.6 L1696.8 464.3 L1697.0 464.0 L1697.2 463.8Z"/>
</svg>
<!-- PANEL-CONTENT -->
<div id="x41" class="tab" style="left:895px;">视图</div>
<div id="x42" class="tab" style="left:979px;">日志</div>
<div id="x43" class="tab" style="left:1063px;">网络</div>
<div id="x44" class="tab" style="left:1147px;">存储</div>
<div id="x45" class="tab" style="left:1231px;font-weight:bold;color:#ffffff;">编译日志</div>
<div id="x46" class="tab" style="left:1363px;">Mock</div>
<div class="abs" style="left:1232px;top:907px;width:96px;height:3px;background:#ffffff;"></div>
<div class="log" style="top:912px;"><span class="lp" id="lg0a" style="left:0px;">2022-05-18 </span><span class="lp" id="lg0t" style="left:172px;">21:55:58 </span><span class="lp cj" id="lg0b" style="left:291px;">编译 </span><span class="lp" id="lg0c" style="left:358px;">miniprogram_npm</span><span class="lp" id="lg0d" style="left:592px;">/@vant/weapp/</span><span class="lp" id="lg0e" style="left:798px;">loading/index</span></div>
<div class="log" style="top:952px;"><span class="lp" id="lg1a" style="left:0px;">2022-05-18 </span><span class="lp" id="lg1t" style="left:172px;">21:55:58 </span><span class="lp cj" id="lg1b" style="left:291px;">编译</span></div>
<div class="log" style="top:992px;"><span class="lp" id="lg2c" style="left:0px;">miniprogram_npm</span><span class="lp" id="lg2d" style="left:234px;">/@vant/weapp/</span><span class="lp" id="lg2e" style="left:440px;">calendar/components/header/index</span></div>
<div class="log" style="top:1032px;"><span class="lp" id="lg3a" style="left:0px;">2022-05-18 </span><span class="lp" id="lg3t" style="left:172px;">21:55:58 </span><span class="lp cj" id="lg3b" style="left:291px;">编译 </span><span class="lp" id="lg3c" style="left:358px;">miniprogram_npm</span><span class="lp" id="lg3d" style="left:592px;">/@vant/weapp/</span><span class="lp" id="lg3e" style="left:798px;">toast/index</span></div>
<div class="log" style="top:1072px;"><span class="lp" id="lg4a" style="left:0px;">2022-05-18 </span><span class="lp" id="lg4t" style="left:172px;">21:55:58 </span><span class="lp cj" id="lg4b" style="left:291px;">编译</span></div>
<div class="log" style="top:1112px;"><span class="lp" id="lg5c" style="left:0px;">miniprogram_npm</span><span class="lp" id="lg5d" style="left:234px;">/@vant/weapp/</span><span class="lp" id="lg5e" style="left:440px;">calendar/components/month/index</span></div>
<div class="log" style="top:1152px;"><span class="lp" id="lg6a" style="left:0px;">2022-05-18 </span><span class="lp" id="lg6t" style="left:172px;">21:55:58 </span><span class="lp cj" id="lg6b" style="left:291px;">编译 </span><span class="lp" id="lg6c" style="left:358px;">miniprogram_npm</span><span class="lp" id="lg6d" style="left:592px;">/@vant/weapp/</span><span class="lp" id="lg6e" style="left:798px;">sticky/index</span></div>
<div class="log" style="top:1192px;"><span class="lp" id="lg7a" style="left:0px;">2022-05-18 </span><span class="lp" id="lg7t" style="left:172px;">21:55:58 </span><span class="lp cj" id="lg7b" style="left:291px;">编译 </span><span class="lp" id="lg7c" style="left:358px;">miniprogram_npm</span><span class="lp" id="lg7d" style="left:592px;">/@vant/weapp/</span><span class="lp" id="lg7e" style="left:798px;">picker-column/index</span></div>
<div class="log" style="top:1232px;"><span class="lp" id="lg8a" style="left:0px;">2022-05-18 </span><span class="lp" id="lg8t" style="left:172px;">21:55:58 </span><span class="lp cj" id="lg8b" style="left:291px;">编译 </span><span class="lp" id="lg8c" style="left:358px;">miniprogram_npm</span><span class="lp" id="lg8e" style="left:592px;">/wxa-plugin-canvas/index/index</span></div>
<div class="log" style="top:1272px;"><span class="lp" id="lg9a" style="left:0px;">2022-05-18 </span><span class="lp" id="lg9t" style="left:172px;">21:55:58 </span><span class="lp" id="lg9c" style="left:292px;">warning: </span><span class="lp" id="lg9d" style="left:410px;">Circular </span><span class="lp" id="lg9e" style="left:521px;">dependency: </span><span class="lp" id="lg9f" style="left:694px;">Users/wanggang/Downloads/bee-</span></div>
<div class="log" style="top:1312px;"><span class="lp" id="lg10c" style="left:0px;">master/components/</span><span class="lp" id="lg10d" style="left:277px;">parser.20200731.min</span><span class="lp" id="lg10e" style="left:546px;">/trees/trees.js </span><span class="lp" id="lg10f" style="left:744px;">-&gt;</span></div>
<div class="log" style="top:1352px;"><span class="lp" id="lg11c" style="left:0px;">Users/wanggang/Downloads/bee-</span></div>
<div class="log" style="top:1392px;"><span class="lp" id="lg12c" style="left:0px;">master/components/</span><span class="lp" id="lg12d" style="left:277px;">parser.20200731.min</span><span class="lp" id="lg12e" style="left:546px;">/trees/trees.js</span></div>
</div>
</body>
</html>
